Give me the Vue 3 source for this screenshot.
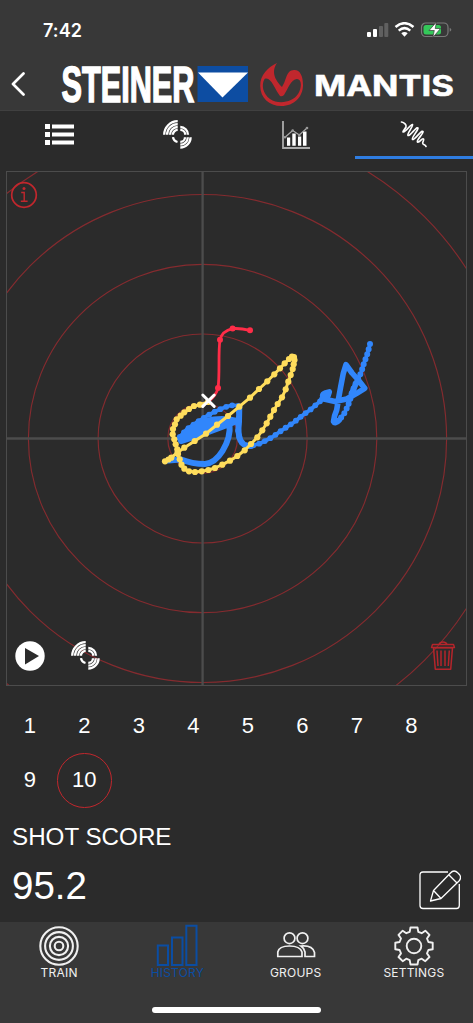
<script setup>
import { ref } from 'vue'

const rings = [34.8, 104.5, 174.2, 244, 313.7]
const shots = [1, 2, 3, 4, 5, 6, 7, 8, 9, 10]
const selected = ref(10)

const yellow = [
  [208, 402], [200, 404.7], [194, 406], [189, 409], [184.3, 412.3], [180.7, 415.7], [176.7, 419.3],
  [175, 424.3], [173, 429], [172.7, 434.3], [174.3, 439.3], [175.7, 444.3], [177.3, 449.3], [178, 454],
  [179.7, 459.3], [181.5, 464.7], [184.3, 468.7], [189, 471.3], [195, 472], [201.7, 471.3], [208.3, 470],
  [215, 468], [222.3, 464.7], [230, 460.7], [237.3, 456], [244.7, 450.3], [251, 444], [257.3, 437.3],
  [262.3, 430.3], [266.7, 423.3], [270.3, 416.7], [274, 410], [277.7, 404], [282, 397.3], [285.7, 389.3],
  [288.3, 381.7], [290.7, 375], [292.7, 369], [293.7, 364.3], [294.5, 360], [294, 357], [292, 356.5],
  [289, 359], [284.7, 363.3], [280, 368.3], [274.3, 374.3], [267.3, 381.3], [259, 389], [250, 397.7],
  [239.3, 406.7], [228, 416], [217, 424.7], [206, 433.7], [194.7, 441], [184.3, 447.7], [177.5, 452.5],
  [171.3, 457.7], [168.5, 459.5], [165, 461.3]
]
const line = (pts) => pts.map((p) => p.join(',')).join(' ')

const red = [[250, 330.3], [232.6, 328.6], [220, 339.8], [218, 388]]

const blueTail = 'M370 344L368.7 349L367 355L365.3 359.7L363.3 365.3L361.3 372.3L358.3 378.3L355.3 384.3L351.7 393.3L350 400L347.3 407.3L344 414L339.3 420'
const blueKnot = 'M358.3 378.3L351.7 393.3M339.3 420Q335 424.5 333.5 421.5Q334 416 336.7 410L338.3 400L340.7 386.7L343.3 373.3L346 364.7L352 373L358.3 380L364.7 388.3L356.7 393.3L346.7 399L335 401.5L325 399.3Q320 395 325.5 393L329.3 391.8L328 396L322 399'
const blueMid = 'M320 401.3L310 410L304.3 414L293.3 422.7L282.3 430L271.7 437.5L260 443.5L251 446Q243 446 240 439.3L238 431.7L238.3 421.7L239.3 413.3L238.3 406Q233.3 404 225 407.3L216.7 410.7L206.7 416L196.7 422.3L186.7 429.3L179.3 437.5'
const blueHeavy = 'M239.300 407L239 422Q236 447 251 446M179.800 438.500Q192 427 206 421Q222 417 237 421Q205 434 181 441M181 439Q198 430 230 421M190 433Q210 424 224 422M196 429Q208 420 232 420M229.500 424Q231 437 222.500 451Q215 463 205 464Q192 464 181 459.500L168 460.500'
</script>

<template>
  <main class="screen">
    <header class="header">
      <div class="status">
        <span class="time">7:42</span>
        <svg class="status-icons" width="86" height="16" viewBox="0 0 86 16">
          <rect x="0" y="10" width="4" height="5" rx="1" fill="#fff" />
          <rect x="6" y="7" width="4" height="8" rx="1" fill="#fff" />
          <rect x="12" y="4" width="4" height="11" rx="1" fill="#606060" />
          <rect x="17.300" y="1" width="4" height="14" rx="1" fill="#606060" />
          <g fill="none" stroke="#fff" stroke-width="2.500">
            <path d="M28.500 5Q37.500 -2.600 46.500 5" />
            <path d="M31.700 8.600Q37.500 3.700 43.300 8.600" />
          </g>
          <path d="M34.300 11.200Q37.500 8.800 40.700 11.200L37.500 14.800Z" fill="#fff" />
          <rect x="54.500" y="1" width="26.500" height="13.500" rx="4.200" fill="none" stroke="#7a7a7a" stroke-width="1.200" />
          <path d="M82.700 5.700Q86 7.700 82.700 9.800Z" fill="#7a7a7a" />
          <rect x="56.500" y="3" width="17.500" height="9.500" rx="2.500" fill="#34c759" />
          <path d="M69.500 0L62 8.500H67.300L65.800 15.500L73.500 6.500H68.200Z" fill="#fff" stroke="#383838" stroke-width="0.700" />
        </svg>
      </div>
      <div class="brand">
        <svg class="back" width="14" height="24" viewBox="0 0 14 24">
          <path d="M12.500 1.500L2 12L12.500 22.500" fill="none" stroke="#fff" stroke-width="2.700" stroke-linecap="round" stroke-linejoin="round" />
        </svg>
        <svg class="logos" width="396" height="46" viewBox="0 0 396 46">
          <text class="steiner" x="0.500" y="40.500" textLength="133" lengthAdjust="spacingAndGlyphs">STEINER</text>
          <rect x="136.500" y="5" width="50.500" height="36" fill="#0d4da2" />
          <path d="M137 11.500H187L161.500 36.500Z" fill="#fff" />
          <g transform="translate(199 2)">
            <path fill-rule="evenodd" fill="#c1272d" d="M17 0C8 4 0 12 .2 23C.4 35 9 43 21.500 43C34 43 43 34 43 22C43 13 40 7 34.500 7C26 6.500 26.500 18 22 24C17 19 10 10 17 0ZM4.500 16C11 13 15 27 20 33Q22 34 24 32C28 26 31 16 37 16C42 16 42 25 38 31C33 39 19 42 10 36C3 31 1 22 4.500 16Z" />
          </g>
          <text class="mantis" x="253" y="34.500" textLength="140" lengthAdjust="spacingAndGlyphs">MANTIS</text>
        </svg>
      </div>
    </header>

    <svg class="defs" width="0" height="0">
      <symbol id="quad-target" viewBox="0 0 29 29">
        <g fill="none" stroke="currentColor" stroke-width="2.300">
          <path d="M1.200 14.800A13.500 13.500 0 0 1 14.700 1.200M4.100 14.800A10.600 10.600 0 0 1 14.700 4.100M7 14.800A7.700 7.700 0 0 1 14.700 7M9.900 14.800A4.800 4.800 0 0 1 14.700 9.900" />
          <path d="M17.300 7A7.700 7.700 0 0 1 25 14.700M17.300 9.800A4.900 4.900 0 0 1 22.200 14.700" />
          <path d="M27.600 17.200A10.300 10.300 0 0 1 17.300 27.500M24.800 17.200A7.500 7.500 0 0 1 17.300 24.700M22 17.200A4.700 4.700 0 0 1 17.300 21.900" />
          <path d="M10 17.200Q10.500 21 14.500 22" />
        </g>
      </symbol>
    </svg>

    <nav class="tabs">
      <button class="tab">
        <svg width="29" height="21" viewBox="0 0 29 21" fill="#fff">
          <path d="M0 0H5V5H0ZM7 0.500H29V4.500H7ZM0 8H5V13H0ZM7 8.500H29V12.500H7ZM0 16H5V21H0ZM7 16.500H29V20.500H7Z" />
        </svg>
      </button>
      <button class="tab">
        <svg width="29" height="29"><use href="#quad-target" /></svg>
      </button>
      <button class="tab">
        <svg class="bars" width="28" height="29" viewBox="0 0 28 29" fill="none">
          <path d="M1 0V27H28" stroke="#aaa" stroke-width="1.800" />
          <path d="M5 16.500H8.200V24.800H5ZM10.300 12.500H13.700V24.800H10.300ZM16 15.500H19.200V24.800H16ZM21 10.500H24.500V24.800H21Z" fill="#fff" />
          <path d="M3 16.300L10.700 9.500L17.300 14L25 7" stroke="#aaa" stroke-width="1.200" />
          <g fill="#999"><circle cx="3" cy="16.300" r="1.300" /><circle cx="10.700" cy="9.500" r="1.300" /><circle cx="17.300" cy="14" r="1.300" /><circle cx="25" cy="7" r="1.300" /></g>
        </svg>
      </button>
      <button class="tab active">
        <svg class="wave" width="28" height="28" viewBox="0 0 28 28">
          <path d="M1.500 2C4 2.500 7 5 6 7C4.500 10 2 12 3.500 12C6 12 11 3.500 12.500 4.500C13.500 6 6.500 14 8 15.500C10 16.500 16.500 6 18 8C18.500 10 11 18 12.500 19.500C14.500 20.500 21.500 9.500 23 11.500C23.500 14 16 20 17.500 22C19.500 23 22 17.500 23.500 19C24.500 20.500 21.500 22.500 23 24C24 25 25.500 24.500 26 26.500" fill="none" stroke="#fff" stroke-width="1.700" stroke-linecap="round" />
        </svg>
      </button>
    </nav>

    <section class="chart">
      <svg class="plot" width="459" height="514" viewBox="7 172 459 514">
        <g fill="none" stroke="#852b2f" stroke-width="1.150">
          <circle v-for="r in rings" :key="r" cx="202.600" cy="438.500" :r="r" />
        </g>
        <path d="M202.600 172V686M7 438.500H467" stroke="#4c4c4c" stroke-width="2.300" />
        <g fill="none" stroke="#3186fb" stroke-linecap="round" stroke-linejoin="round">
          <path :d="blueTail" stroke-width="3.500" />
          <path :d="blueTail" stroke-width="6" stroke-dasharray="0 5.300" />
          <path :d="blueKnot" stroke-width="5.600" />
          <path :d="blueMid" stroke-width="3.700" />
          <path :d="blueMid" stroke-width="5.800" stroke-dasharray="0 6.200" />
          <path :d="blueHeavy" stroke-width="6" />
        </g>
        <polyline :points="line(yellow)" fill="none" stroke="#ffdd5c" stroke-width="3" stroke-linejoin="round" />
        <circle v-for="(p, i) in yellow" :key="i" :cx="p[0]" :cy="p[1]" r="3.100" fill="#ffdd5c" />
        <path d="M250 330.300Q240 328 232.600 328.600Q222 331 220 339.800C218 352 220 376 218 388Q216 396 209 401" fill="none" stroke="#ff2d48" stroke-width="2.800" />
        <circle v-for="(p, i) in red" :key="'r' + i" :cx="p[0]" :cy="p[1]" r="3" fill="#ff2d48" />
        <path d="M202.800 395L214.200 406.400M214.200 395L202.800 406.400" stroke="#fff" stroke-width="3" stroke-linecap="round" />
      </svg>
      <svg class="info" width="28" height="28" viewBox="0 0 28 28">
        <g fill="none" stroke="#c1272d" stroke-width="1.700">
          <circle cx="14" cy="14" r="12.300" />
          <path d="M11.200 11.500H14.200V20.300M10.800 20.300H17.600" stroke-width="1.400" />
        </g>
        <circle cx="14" cy="7.500" r="1.500" fill="#c1272d" />
      </svg>
      <svg class="play" width="30" height="30" viewBox="0 0 30 30">
        <circle cx="15" cy="15" r="14.700" fill="#fff" />
        <path d="M10 7L24 15L10 23.500Z" fill="#2b2b2b" />
      </svg>
      <svg class="target" width="29" height="29"><use href="#quad-target" /></svg>
      <svg class="trash" width="26" height="30" viewBox="0 0 26 30" fill="none" stroke="#b5252b" stroke-width="1.400" stroke-linejoin="round">
        <path d="M2.500 3.500H23.500L24.500 6.500H1.500ZM9 3.200Q10 1 13 1Q16 1 17 3.200" />
        <path d="M3.500 6.800H22.500L20.700 28.300H5.300ZM7 9.500L8 25M11 9.500V25M15 9.500V25M19.300 9.500L18.300 25" stroke-width="1.500" />
      </svg>
    </section>

    <section class="shots">
      <button v-for="n in shots" :key="n" class="shot" :class="{ selected: n === selected }" @click="selected = n">{{ n }}</button>
    </section>

    <section class="score">
      <div>
        <h2 class="label">SHOT SCORE</h2>
        <p class="value">95.2</p>
      </div>
      <svg class="edit" width="42" height="40" viewBox="0 0 42 40" fill="none" stroke="#fff" stroke-width="1.300" stroke-linejoin="round">
        <path d="M29 2H4Q1 2 1 5V35.500Q1 38.500 4 38.500H37.500Q40.300 38.500 40.300 35.500V14" />
        <path d="M11.500 31L14.500 20.500L31.500 3Q35 -1 39 3Q43.500 7 40 11L22 28.500ZM14.500 20.500L22 28.500M30 5L38 13" />
      </svg>
    </section>

    <footer class="footer">
      <nav class="bottom">
        <a class="item">
          <svg width="42" height="42" viewBox="0 0 42 42" fill="none" stroke="#f0f0f0" stroke-width="2.100">
            <circle cx="21" cy="22" r="18.700" /><circle cx="21" cy="22" r="13.900" /><circle cx="21" cy="22" r="9.100" /><circle cx="21" cy="22" r="4.300" />
          </svg>
          <span>TRAIN</span>
        </a>
        <a class="item on">
          <svg width="42" height="42" viewBox="0 0 42 42" fill="none" stroke="#0b4da2" stroke-width="2">
            <path d="M1.800 21.500H12V41H1.800ZM16 13.500H26.500V41H16ZM30.300 1.800H40.500V41H30.300Z" />
          </svg>
          <span>HISTORY</span>
        </a>
        <a class="item">
          <svg width="42" height="42" viewBox="0 0 42 42" fill="none" stroke="#f0f0f0" stroke-width="1.700">
            <circle cx="14.500" cy="14.200" r="5.400" /><circle cx="27.500" cy="14.200" r="5.400" />
            <path d="M2.800 32.500V28Q4 22 14.500 22Q25 22 27 28V32.500ZM26 22Q37.500 21 39.500 28.500V32.500H30V28Q29 24 26 22Z" />
          </svg>
          <span>GROUPS</span>
        </a>
        <a class="item">
          <svg width="42" height="42" viewBox="0 0 42 42" fill="none" stroke="#f0f0f0" stroke-width="1.900" stroke-linejoin="round">
            <circle cx="21" cy="22" r="7.300" />
            <path d="M17.500 3.500H24.500L25.300 7.800L28.700 9.200L32.300 6.700L36.500 10.900L34 14.500L35.400 18L39.700 18.700V25.200L35.400 26L34 29.400L36.500 33L32.300 37.200L28.700 34.700L25.300 36.100L24.500 40.500H17.500L16.700 36.100L13.300 34.700L9.700 37.200L5.500 33L8 29.400L6.600 26L2.300 25.200V18.700L6.600 18L8 14.500L5.500 10.900L9.700 6.700L13.300 9.200L16.700 7.800Z" />
          </svg>
          <span>SETTINGS</span>
        </a>
      </nav>
      <div class="home"></div>
    </footer>
  </main>
</template>

<style>
body {
  background: #2b2b2b;
}
</style>

<style scoped>
.screen {
  width: 473px;
  height: 1023px;
  display: flex;
  flex-direction: column;
  overflow: hidden;
  background: #2b2b2b;
  color: #fff;
  font-family: "Liberation Sans", Arial, sans-serif;
}
button {
  padding: 0;
  border: 0;
  background: none;
  color: inherit;
  font-family: inherit;
}
svg {
  display: block;
}
.defs {
  height: 0;
}
.header {
  box-sizing: border-box;
  height: 111px;
  flex: none;
  background: #383838;
  border-bottom: 1px solid #404040;
}
.status {
  display: flex;
  justify-content: space-between;
  align-items: flex-start;
  height: 61px;
  padding: 0 20px 0 43px;
}
.time {
  margin-top: 20px;
  font: 600 18px/22px Inter, sans-serif;
  letter-spacing: 0.1px;
}
.status-icons {
  margin-top: 22px;
}
.brand {
  display: flex;
  align-items: center;
  padding-left: 11px;
}
.logos {
  margin-left: 36px;
  overflow: visible;
}
.steiner {
  font: 700 50px "Liberation Sans", sans-serif;
  fill: #fff;
  stroke: #fff;
  stroke-width: 1.6px;
}
.mantis {
  font: 700 28px Inter, sans-serif;
  fill: #fff;
  stroke: #fff;
  stroke-width: 0.5px;
}
.tabs {
  display: grid;
  grid-template-columns: repeat(4, 1fr);
  height: 48px;
  flex: none;
}
.tab {
  display: flex;
  align-items: center;
  justify-content: center;
  padding-top: 1px;
  border-bottom: 3px solid transparent;
  color: #fff;
}
.bars {
  margin-top: 2px;
}
.tab.active {
  border-color: #2f7de1;
}
.chart {
  position: relative;
  flex: none;
  width: 459px;
  height: 513px;
  margin: 12px 0 0 6px;
  border: 1px solid #4c4c4c;
  color: #fff;
  overflow: hidden;
}
.chart .info,
.chart .play,
.chart .target,
.chart .trash {
  position: absolute;
}
.info {
  left: 3px;
  top: 9px;
}
.play {
  left: 8px;
  bottom: 14px;
}
.target {
  left: 64px;
  bottom: 15px;
}
.trash {
  right: 10px;
  bottom: 14px;
}
.shots {
  display: grid;
  grid-template-columns: repeat(8, 54.5px);
  grid-auto-rows: 54.5px;
  padding: 12.5px 0 0 2.5px;
  flex: none;
}
.shot {
  font-size: 22px;
  border: 1.3px solid transparent;
  border-radius: 50%;
}
.shot.selected {
  border-color: #c1272d;
}
.score {
  display: flex;
  justify-content: space-between;
  align-items: flex-end;
  padding: 14px 12px 0 12px;
}
.label {
  margin: 0;
  font-size: 24.2px;
  line-height: 30px;
  font-weight: 400;
}
.value {
  margin: 11px 0 0;
  font-size: 38.5px;
  line-height: 46px;
}
.edit {
  margin-bottom: -1px;
}
.footer {
  height: 101px;
  flex: none;
  margin-top: auto;
  background: #383838;
}
.bottom {
  display: grid;
  grid-template-columns: repeat(4, 1fr);
  padding-top: 2px;
}
.item {
  display: flex;
  flex-direction: column;
  align-items: center;
  height: 83px;
  color: #f0f0f0;
  font: 400 12px/14px Inter, sans-serif;
  letter-spacing: 0.2px;
}
.item.on {
  color: #0b4da2;
}
.home {
  width: 169px;
  height: 6px;
  margin: 0 auto;
  border-radius: 3px;
  background: #fff;
}
</style>
